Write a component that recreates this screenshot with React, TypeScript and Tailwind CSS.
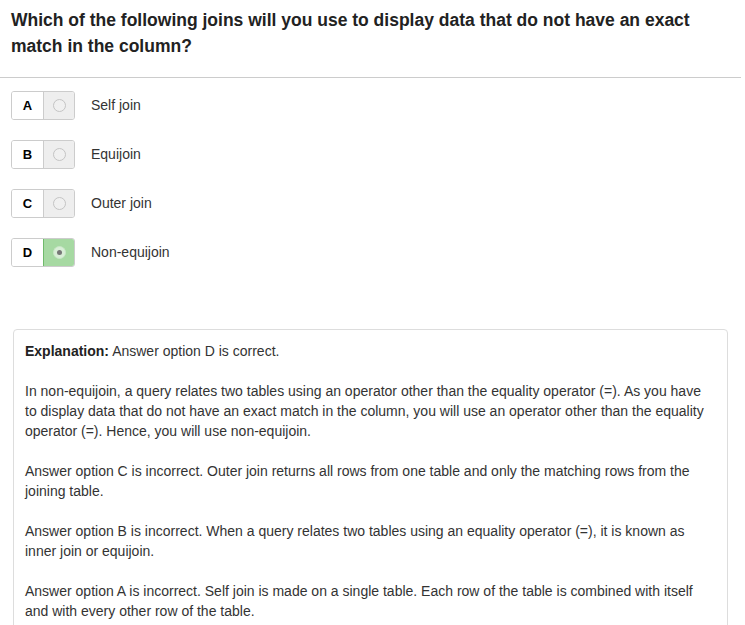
const options = [
  { letter: 'A', label: 'Self join', selected: false },
  { letter: 'B', label: 'Equijoin', selected: false },
  { letter: 'C', label: 'Outer join', selected: false },
  { letter: 'D', label: 'Non-equijoin', selected: true },
];

function Radio({ checked }: { checked: boolean }) {
  return (
    <span
      className={
        checked
          ? 'w-[13px] h-[13px] rounded-full border border-[#c8e6c6] bg-[#d9eed7] flex items-center justify-center'
          : 'w-[13px] h-[13px] rounded-full border border-[#c4c4c4] bg-[#f0f0f0]'
      }
    >
      {checked && <span className="w-[5px] h-[5px] rounded-full bg-[#777]" />}
    </span>
  );
}

export default function App() {
  return (
    <div className="w-[745px] h-[625px] bg-white overflow-hidden text-[#333]" style={{ fontFamily: '"Liberation Sans", Arial, sans-serif' }}>
      <h1 className="px-[11px] pt-[7px] text-[17.5px] leading-[26px] font-bold text-[#222]">
        Which of the following joins will you use to display data that do not have an exact
        <br />
        match in the column?
      </h1>
      <div className="mt-[18px] mr-[4px] border-t border-[#cccccc]" />

      <div className="pl-[11px] pt-[13px] flex flex-col gap-[20px]">
        {options.map((o) => (
          <div key={o.letter} className="flex items-center h-[29px]">
            <div className="flex h-[29px] w-[64px] rounded-[3px] border border-[#cccccc] overflow-hidden">
              <div className="w-[32px] flex items-center justify-center text-[13px] font-bold text-black bg-white border-r border-[#cccccc]">
                {o.letter}
              </div>
              <div
                className={
                  o.selected
                    ? 'flex-1 flex items-center justify-center bg-[#a6d9a2] border border-[#6fba6b] -m-px'
                    : 'flex-1 flex items-center justify-center bg-[#eeeeee]'
                }
              >
                <Radio checked={o.selected} />
              </div>
            </div>
            <span className="ml-[16px] text-[14px]">{o.label}</span>
          </div>
        ))}
      </div>

      <div className="mt-[62px] ml-[13px] w-[715px] rounded-[4px] border border-[#dddddd] px-[11px] pt-[11px] pb-[10px] text-[14px] leading-[20px]">
        <p>
          <b className="text-[#222]">Explanation:</b> Answer option D is correct.
        </p>
        <p className="mt-[20px]">
          In non-equijoin, a query relates two tables using an operator other than the equality operator (=). As you have to display data that do not have an exact match in the column, you will use an operator other than the equality operator (=). Hence, you will use non-equijoin.
        </p>
        <p className="mt-[20px]">
          Answer option C is incorrect. Outer join returns all rows from one table and only the matching rows from the joining table.
        </p>
        <p className="mt-[20px]">
          Answer option B is incorrect. When a query relates two tables using an equality operator (=), it is known as inner join or equijoin.
        </p>
        <p className="mt-[20px]">
          Answer option A is incorrect. Self join is made on a single table. Each row of the table is combined with itself and with every other row of the table.
        </p>
      </div>
    </div>
  );
}
